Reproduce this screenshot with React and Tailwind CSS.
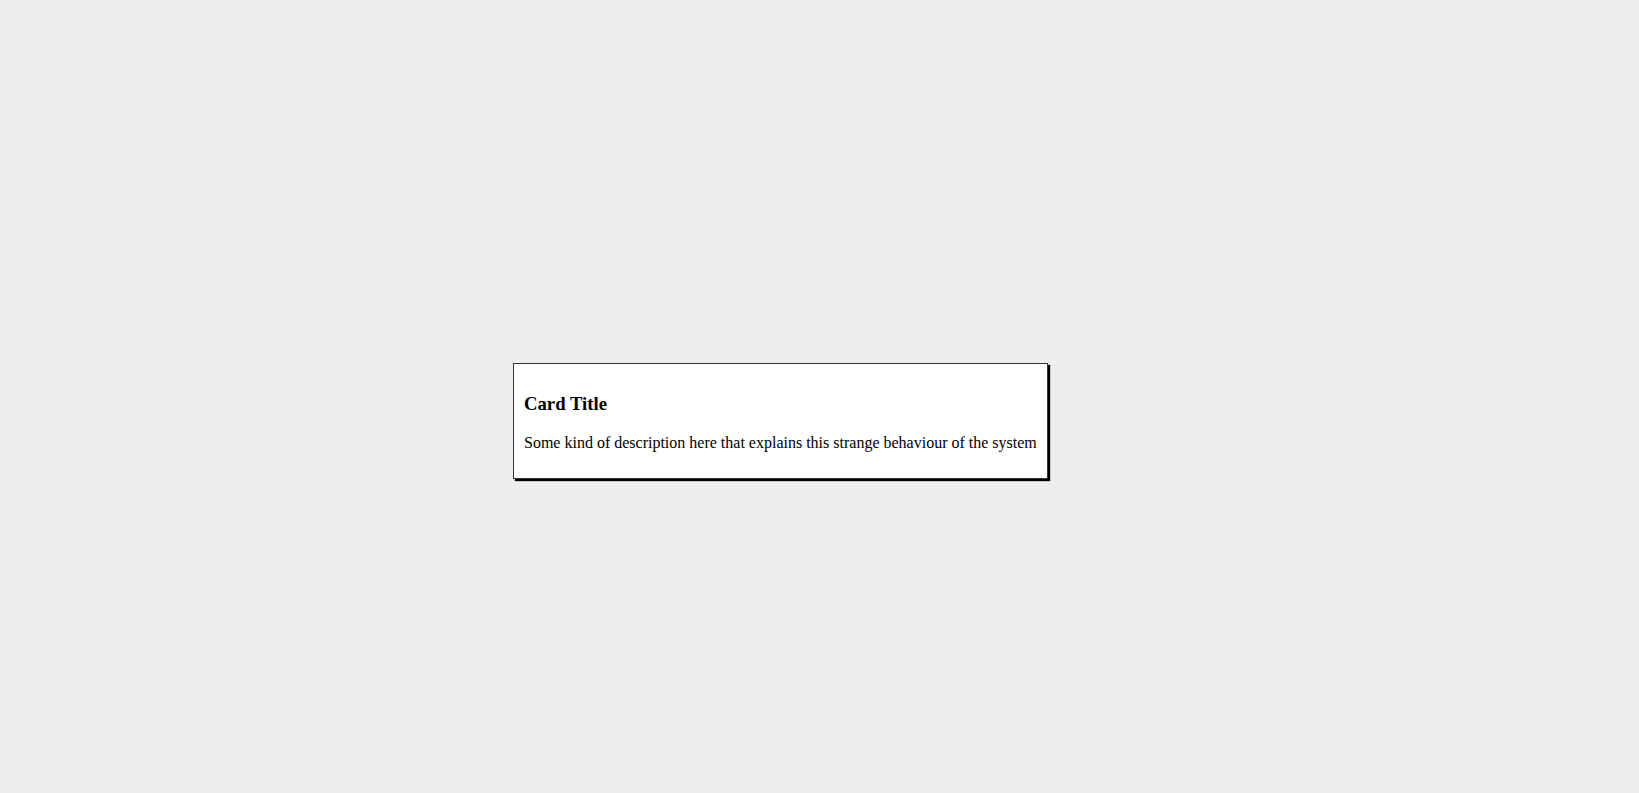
export default function App() {
  return (
    <div className="min-h-screen w-full bg-[#eeeeee] pt-[363px] pl-[513px]" style={{ fontFamily: '"Liberation Serif", "Times New Roman", serif' }}>
      <div className="inline-block bg-white border border-[#333333] px-[10px] py-[10px] shadow-[2px_2px_1px_#000000] text-black">
        <h3 className="text-[18.72px] font-bold leading-[normal] mt-[18.72px] mb-[19.72px]">Card Title</h3>
        <p className="text-[16px] leading-[normal] mb-[16px]">Some kind of description here that explains this strange behaviour of the system</p>
      </div>
    </div>
  );
}
